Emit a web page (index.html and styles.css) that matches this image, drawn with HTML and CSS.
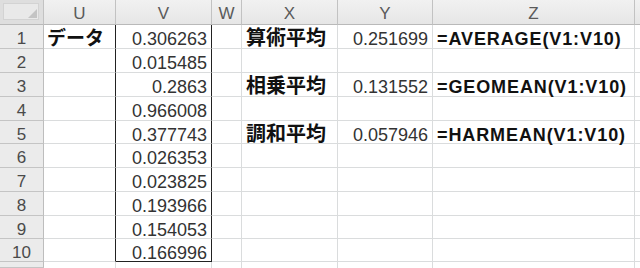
FILE: index.html
```html
<!DOCTYPE html>
<html lang="ja">
<head>
<meta charset="utf-8">
<link rel="stylesheet" href="styles.css">
</head>
<body>
<div class="sheet">
  <div class="c h corner"><span class="tri"></span></div>
  <div class="c h">U</div><div class="c h">V</div><div class="c h">W</div><div class="c h">X</div><div class="c h">Y</div><div class="c h">Z</div><div class="c h"></div>

  <div class="c rh">1</div><div class="c jp boxL">データ</div><div class="c num boxR">0.306263</div><div class="c"></div><div class="c jp kanji">算術平均</div><div class="c num">0.251699</div><div class="c f">=AVERAGE(V1:V10)</div><div class="c"></div>

  <div class="c rh">2</div><div class="c boxL"></div><div class="c num boxR">0.015485</div><div class="c"></div><div class="c"></div><div class="c"></div><div class="c"></div><div class="c"></div>

  <div class="c rh">3</div><div class="c boxL"></div><div class="c num boxR">0.2863</div><div class="c"></div><div class="c jp kanji">相乗平均</div><div class="c num">0.131552</div><div class="c f">=GEOMEAN(V1:V10)</div><div class="c"></div>

  <div class="c rh">4</div><div class="c boxL"></div><div class="c num boxR">0.966008</div><div class="c"></div><div class="c"></div><div class="c"></div><div class="c"></div><div class="c"></div>

  <div class="c rh">5</div><div class="c boxL"></div><div class="c num boxR">0.377743</div><div class="c"></div><div class="c jp kanji">調和平均</div><div class="c num">0.057946</div><div class="c f">=HARMEAN(V1:V10)</div><div class="c"></div>

  <div class="c rh">6</div><div class="c boxL"></div><div class="c num boxR">0.026353</div><div class="c"></div><div class="c"></div><div class="c"></div><div class="c"></div><div class="c"></div>

  <div class="c rh">7</div><div class="c boxL"></div><div class="c num boxR">0.023825</div><div class="c"></div><div class="c"></div><div class="c"></div><div class="c"></div><div class="c"></div>

  <div class="c rh">8</div><div class="c boxL"></div><div class="c num boxR">0.193966</div><div class="c"></div><div class="c"></div><div class="c"></div><div class="c"></div><div class="c"></div>

  <div class="c rh">9</div><div class="c boxL"></div><div class="c num boxR">0.154053</div><div class="c"></div><div class="c"></div><div class="c"></div><div class="c"></div><div class="c"></div>

  <div class="c rh">10</div><div class="c boxL"></div><div class="c num boxR boxB">0.166996</div><div class="c"></div><div class="c"></div><div class="c"></div><div class="c"></div><div class="c"></div>

  <div class="c rh"></div><div class="c"></div><div class="c"></div><div class="c"></div><div class="c"></div><div class="c"></div><div class="c"></div><div class="c"></div>
</div>
</body>
</html>
```

FILE: styles.css
```css
html, body {
  margin: 0;
  padding: 0;
  background: #ffffff;
  overflow: hidden;
}

.sheet {
  display: grid;
  grid-template-columns: 44px 72px 96px 30px 96px 95px 202px 5px;
  grid-template-rows: 25px 24px 24px 24px 24px 23px 24px 24px 24px 23px 23px 6px;
  width: 640px;
  height: 268px;
  overflow: hidden;
  font-family: "Liberation Sans", Arial, sans-serif;
  font-size: 18px;
  color: #2a2a2a;
}

.c {
  box-sizing: border-box;
  border-right: 1px solid #dadcdd;
  border-bottom: 1px solid #dadcdd;
  display: flex;
  align-items: flex-start;
  line-height: 17px;
  padding: 6px 4px 0 4px;
  white-space: nowrap;
}

.h {
  background: linear-gradient(#f1f1f1, #e6e6e6);
  border-right: 1px solid #c2c2c2;
  border-bottom: 1px solid #b9b9b9;
  justify-content: center;
  color: #5a5a5a;
  font-size: 17px;
  padding-top: 5px;
}

.corner {
  background: #dedede;
  position: relative;
}

.corner::before {
  content: "";
  position: absolute;
  left: 3px;
  top: 3px;
  right: 4px;
  bottom: 4px;
  background: #e9e9e9;
  border: 1px solid #d3d3d3;
}

.tri {
  position: absolute;
  right: 6px;
  bottom: 6px;
  width: 0;
  height: 0;
  border-left: 9px solid transparent;
  border-bottom: 9px solid #c4c4c4;
}

.rh {
  background: #ebebeb;
  border-right: 1px solid #bdbdbd;
  border-bottom: 1px solid #c4c4c4;
  justify-content: center;
  color: #4a4a4a;
  font-size: 17px;
  padding-top: 5px;
}

.num {
  justify-content: flex-end;
  color: #333333;
}

.jp {
  font-family: "Noto Sans CJK JP", sans-serif;
  font-weight: 700;
  font-size: 19px;
  line-height: 20px;
  color: #111111;
  padding-left: 3px;
  padding-top: 2px;
}

.kanji {
  font-size: 20px;
  padding-left: 4px;
}

.f {
  font-weight: 700;
  color: #111111;
  letter-spacing: 0.9px;
  padding-left: 4px;
}

.boxL {
  border-right-color: #222222;
}

.boxR {
  border-right-color: #222222;
}

.boxB {
  border-bottom-color: #222222;
}
```
